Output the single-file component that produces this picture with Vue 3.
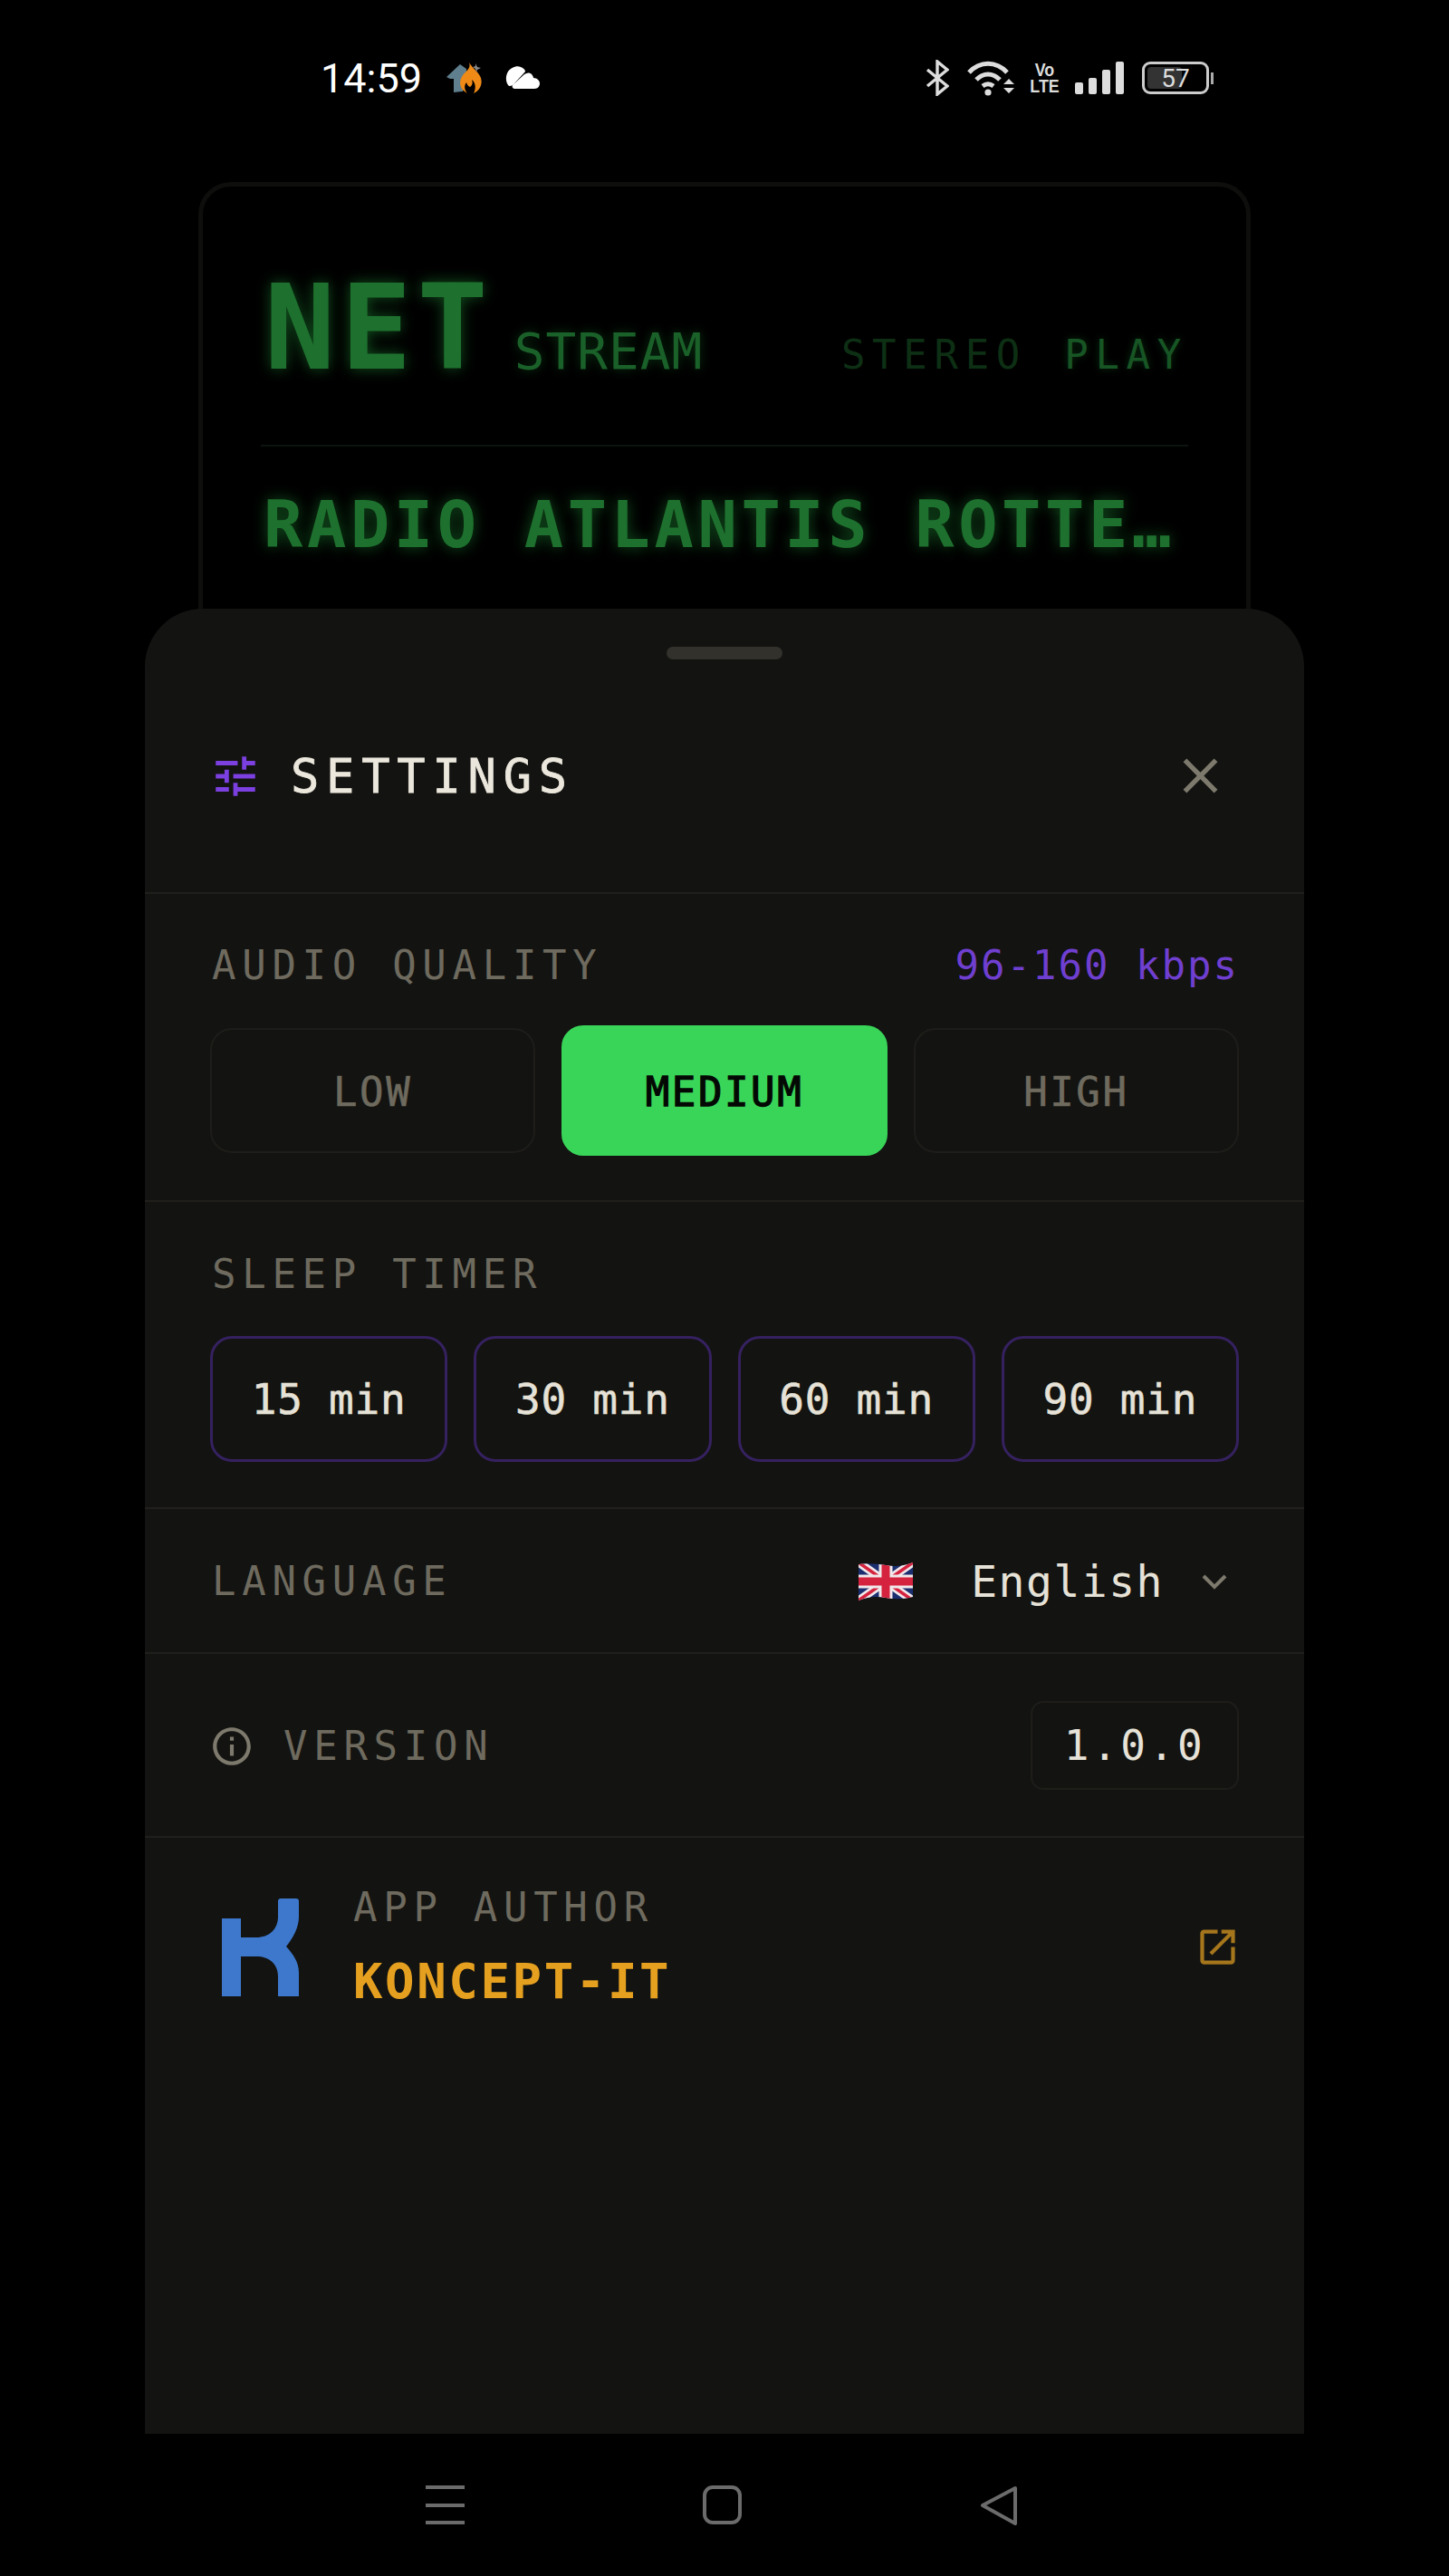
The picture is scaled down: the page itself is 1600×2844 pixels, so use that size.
<template>
  <div class="phone">
    <div class="status-bar">
      <div class="status-left">
        <span class="clock">14:59</span>
        <svg class="ic-home" width="42" height="36" viewBox="0 0 42 36">
          <path d="M0 17 15 3l7 5v3l-4 22-10 1V19H4z" fill="#5f7f8e"/>
          <path d="M25 1c2 6-2 8-7 14-5 7-3 15 2 18l3 2c-3-3-4-8-1-12 1 3 2 4 4 5 3-2 3-5 2-8 4 3 5 9 2 15 7-3 10-10 8-17-2-6-8-9-13-17z" fill="#ef8a17"/>
          <path d="M32 2l2 4 4 1-4 2-1 3-1-4-3-2 3-1z" fill="#8a8a8a"/>
        </svg>
        <svg class="ic-cloud" width="38" height="26" viewBox="0 0 38 26">
          <path d="M4 22C0 18 0 11 3 6c3-4 9-7 14-5 3 1 5 3 5 5l-11 12c-2 3-4 4-7 4z" fill="#fff"/>
          <path d="M11 25c-3 0-4-2-3-4L21 9c3-2 6-2 8 0 1 1 2 3 2 4 4 0 7 3 7 6 0 3-2 6-6 6z" fill="#fff"/>
        </svg>
      </div>
      <div class="status-right">
        <svg width="26" height="40" viewBox="0 0 26 40" fill="none" stroke="#ddd" stroke-width="3.4">
          <path d="M2 11 24 29 13 38V2l11 9L2 29"/>
        </svg>
        <svg width="52" height="40" viewBox="0 0 52 40" fill="none" stroke="#ddd" stroke-width="5">
          <path d="M2 14C14 1 32 1 44 14"/>
          <path d="M10 22c8-8 18-8 26 0"/>
          <path d="M17 29c4-3 8-3 12 0"/>
          <circle cx="23" cy="36" r="3.6" fill="#ddd" stroke="none"/>
          <path d="M46 21l6 6H40zM40 31h12l-6 6z" fill="#ddd" stroke="none"/>
        </svg>
        <div class="volte"><span>Vo</span><span>LTE</span></div>
        <div class="signal">
          <i class="bar-1"></i><i class="bar-2"></i><i class="bar-3"></i><i class="bar-4"></i>
        </div>
        <div class="battery">
          <div class="battery-body">
            <div class="battery-fill"></div>
            <span>57</span>
          </div>
          <div class="battery-nub"></div>
        </div>
      </div>
    </div>

    <div class="app">
      <div class="display">
        <div class="display-top">
          <span class="net">NET</span>
          <span class="stream">STREAM</span>
          <span class="flags"><span class="stereo">STEREO</span> <span class="play">PLAY</span></span>
        </div>
        <div class="station">RADIO ATLANTIS ROTTE…</div>
      </div>

      <div class="sheet">
        <div class="handle"></div>
        <header class="sheet-head">
          <div class="sheet-title">
            <svg width="58" height="58" viewBox="0 0 24 24" fill="#7c3fe0">
              <path d="M3 17v2h6v-2H3zM3 5v2h10V5H3zm10 16v-2h8v-2h-8v-2h-2v6h2zM7 9v2H3v2h4v2h2V9H7zm14 4v-2H11v2h10zm-6-4h2V7h4V5h-4V3h-2v6z"/>
            </svg>
            <h2>SETTINGS</h2>
          </div>
          <svg class="close" width="65" height="65" viewBox="0 0 24 24" fill="#7d796c">
            <path d="M19 6.41 17.59 5 12 10.59 6.41 5 5 6.41 10.59 12 5 17.59 6.41 19 12 13.41 17.59 19 19 17.59 13.41 12z"/>
          </svg>
        </header>

        <section class="block quality">
          <div class="row-head">
            <span class="label">AUDIO QUALITY</span>
            <span class="rate">96-160 kbps</span>
          </div>
          <div class="quality-opts">
            <button v-for="q in qualities" :key="q" class="opt" :class="{ active: q === 'MEDIUM' }">{{ q }}</button>
          </div>
        </section>

        <section class="block timer">
          <div class="label timer-label">SLEEP TIMER</div>
          <div class="timer-opts">
            <button v-for="t in timers" :key="t" class="timer-btn">{{ t }} min</button>
          </div>
        </section>

        <section class="block lang">
          <span class="label">LANGUAGE</span>
          <div class="lang-pick">
            <svg class="flag" width="60" height="42" viewBox="0 0 60 42">
              <clipPath id="flag-wave">
                <path d="M0 2Q15 0 30 3T60 0V38Q45 42 30 39T0 42Z"/>
              </clipPath>
              <g clip-path="url(#flag-wave)">
                <rect width="60" height="42" fill="#1b2f70"/>
                <path d="M0 0 60 42M60 0 0 42" stroke="#f0e8ea" stroke-width="9"/>
                <path d="M0 0 60 42M60 0 0 42" stroke="#d5233f" stroke-width="3.500"/>
                <path d="M30 0V42M0 21H60" stroke="#f0e8ea" stroke-width="15"/>
                <path d="M30 0V42M0 21H60" stroke="#d5233f" stroke-width="9"/>
              </g>
            </svg>
            <span class="lang-name">English</span>
            <svg width="30" height="18" viewBox="0 0 30 18" fill="none" stroke="#7d796c" stroke-width="4">
              <path d="M3 3l12 12L27 3"/>
            </svg>
          </div>
        </section>

        <section class="block version">
          <div class="version-left">
            <svg width="50" height="50" viewBox="0 0 24 24" fill="#7d796c">
              <path d="M11 7h2v2h-2zm0 4h2v6h-2zm1-9C6.48 2 2 6.48 2 12s4.48 10 10 10 10-4.48 10-10S17.52 2 12 2zm0 18c-4.41 0-8-3.59-8-8s3.59-8 8-8 8 3.59 8 8-3.590 8-8 8z"/>
            </svg>
            <span class="label">VERSION</span>
          </div>
          <span class="version-num">1.0.0</span>
        </section>

        <section class="author">
          <svg class="logo" width="85" height="108" viewBox="0 0 85 108" fill="#3d78cc">
            <path d="M0 22H21V43H38C52 43 62 34 62 20V3Q62 0 65 0H82Q85 0 85 3V20C85 32 79 43 71 53 79 62 85 70 85 82V108H62V86C62 72 52 64 38 64H21V108H0Z"/>
          </svg>
          <div class="author-text">
            <span class="label">APP AUTHOR</span>
            <span class="author-name">KONCEPT-IT</span>
          </div>
          <svg class="ext" width="51" height="51" viewBox="0 0 24 24" fill="#a5761c">
            <path d="M19 19H5V5h7V3H5a2 2 0 0 0-2 2v14a2 2 0 0 0 2 2h14c1.100 0 2-.9 2-2v-7h-2v7zM14 3v2h3.590l-9.830 9.830 1.410 1.410L19 6.410V10h2V3h-7z"/>
          </svg>
        </section>
      </div>
    </div>

    <nav class="nav-bar">
      <div class="nav-menu"><i></i><i></i><i></i></div>
      <div class="nav-home"></div>
      <svg width="42" height="44" viewBox="0 0 42 44" fill="none" stroke="#6b6b6b" stroke-width="4" stroke-linejoin="round">
        <path d="M39 3 3 22l36 20z"/>
      </svg>
    </nav>
  </div>
</template>

<script setup>
const qualities = ['LOW', 'MEDIUM', 'HIGH']
const timers = [15, 30, 60, 90]
</script>

<style>
html, body {
  margin: 0;
  background: #000;
}
</style>

<style scoped>
.phone {
  position: relative;
  width: 1600px;
  height: 2844px;
  background: #000;
  display: flex;
  flex-direction: column;
  overflow: hidden;
  font-family: "DejaVu Sans Mono", monospace;
}

.status-bar {
  height: 172px;
  flex: none;
  box-sizing: border-box;
  padding: 64px 260px 0 354px;
  display: flex;
  justify-content: space-between;
  align-items: flex-start;
  color: #fff;
}

.status-left,
.status-right {
  display: flex;
  align-items: center;
  height: 44px;
}

.clock {
  font-family: Roboto, sans-serif;
  font-size: 45px;
  width: 139px;
}

.ic-cloud {
  margin-left: 23px;
}

.status-right {
  gap: 20px;
}

.volte {
  display: flex;
  flex-direction: column;
  align-items: center;
  font-family: "Liberation Sans", sans-serif;
  font-weight: 700;
  font-size: 21px;
  line-height: 18px;
  color: #ddd;
  width: 27px;
  transform: scaleX(0.85);
}

.signal {
  display: flex;
  align-items: flex-end;
  gap: 6px;
  height: 36px;
}

.signal i {
  display: block;
  width: 9px;
  background: #ddd;
  border-radius: 2px;
}

.bar-1 { height: 13px; }
.bar-2 { height: 18px; }
.bar-3 { height: 27px; }
.bar-4 { height: 36px; }

.battery {
  display: flex;
  align-items: center;
  gap: 2px;
}

.battery-body {
  position: relative;
  width: 74px;
  height: 36px;
  box-sizing: border-box;
  border: 3px solid #ccc;
  border-radius: 9px;
  display: flex;
  align-items: center;
  justify-content: center;
  font-family: Roboto, sans-serif;
  font-size: 28px;
  color: #ddd;
}

.battery-fill {
  position: absolute;
  left: 3px;
  top: 3px;
  bottom: 3px;
  width: 38px;
  background: #333;
  border-radius: 4px;
}

.battery-body span {
  position: relative;
}

.battery-nub {
  width: 3px;
  height: 13px;
  background: #aaa;
}

.app {
  position: relative;
  flex: 1;
  min-height: 0;
  margin: 0 160px;
}

/* panel behind the dimmed backdrop */
.display {
  margin: 29px 59px 0;
  height: 600px;
  box-sizing: border-box;
  border: 5px solid #0e0e0c;
  border-radius: 36px;
  padding: 99px 64px 0;
  background: #000;
}

.display-top {
  display: flex;
  align-items: baseline;
  height: 114px;
  padding-bottom: 72px;
  border-bottom: 2px solid #0c140d;
}

.net {
  font-size: 130px;
  font-weight: 700;
  letter-spacing: 6px;
  line-height: 114px;
  color: #1e702e;
  margin-left: 4px;
  text-shadow: 0 0 16px rgba(34, 160, 60, 0.5);
}

.stream {
  font-size: 56px;
  letter-spacing: 1px;
  color: #1a6029;
  margin-left: 23px;
  text-shadow: 0 0 12px rgba(34, 160, 60, 0.35);
}

.flags {
  margin-left: auto;
  font-size: 44px;
  letter-spacing: 7.700px;
  word-spacing: 7px;
}

.stereo {
  color: #0d2f14;
}

.play {
  color: #175524;
  text-shadow: 0 0 8px rgba(34, 160, 60, 0.3);
}

.station {
  margin-top: 42px;
  font-size: 72px;
  font-weight: 700;
  letter-spacing: 4.600px;
  line-height: 88px;
  color: #1e702e;
  white-space: nowrap;
  padding: 0 3px;
  text-shadow: 0 0 16px rgba(34, 160, 60, 0.5);
}

.sheet {
  position: absolute;
  left: 0;
  right: 0;
  top: 500px;
  bottom: 157px;
  background: #131311;
  border-radius: 64px 64px 0 0;
}

.handle {
  width: 128px;
  height: 14px;
  background: #33312c;
  border-radius: 7px;
  margin: 42px auto 0;
}

.sheet-head {
  height: 259px;
  box-sizing: border-box;
  padding: 0 82px 0 71px;
  display: flex;
  align-items: center;
  justify-content: space-between;
  border-bottom: 2px solid #201f1c;
}

.sheet-title {
  display: flex;
  align-items: center;
  gap: 32px;
}

.sheet-title h2 {
  margin: 0;
  font-size: 52px;
  font-weight: 400;
  letter-spacing: 7.800px;
  color: #ebe7dc;
  -webkit-text-stroke: 0.8px #ebe7dc;
}

.block {
  box-sizing: border-box;
  padding: 0 72px;
  border-bottom: 2px solid #201f1c;
}

.label {
  font-size: 44px;
  letter-spacing: 6.700px;
  color: #6e6a5e;
  margin-left: 2px;
}

.row-head {
  display: flex;
  justify-content: space-between;
  align-items: center;
  height: 52px;
}

.rate {
  font-size: 44px;
  letter-spacing: 2px;
  color: #6f3fd0;
}

.quality {
  height: 340px;
  padding-top: 52px;
}

.quality-opts {
  display: grid;
  grid-template-columns: repeat(3, 1fr);
  gap: 29px;
  margin-top: 44px;
}

.opt {
  height: 138px;
  padding: 3px 0 0;
  background: transparent;
  border: 2px solid #1e1d1a;
  border-radius: 24px;
  font-family: inherit;
  font-size: 44px;
  letter-spacing: 2.600px;
  color: #6e6a5e;
  -webkit-text-stroke: 0.6px #6e6a5e;
}

.opt.active {
  background: #39d559;
  border-color: #39d559;
  color: #040804;
  -webkit-text-stroke: 1.300px #040804;
  height: 144px;
  margin: -3px 0;
}

.timer {
  height: 339px;
  padding-top: 54px;
}

.timer-label {
  line-height: 52px;
}

.timer-opts {
  display: grid;
  grid-template-columns: repeat(4, 1fr);
  gap: 29px;
  margin-top: 42px;
}

.timer-btn {
  height: 139px;
  background: transparent;
  border: 3px solid #35215f;
  border-radius: 24px;
  font-family: inherit;
  font-size: 46px;
  letter-spacing: 0.800px;
  color: #e6e2d7;
  -webkit-text-stroke: 0.6px #e6e2d7;
}

.lang {
  height: 160px;
  padding-top: 1px;
  display: flex;
  align-items: center;
  justify-content: space-between;
}

.lang-pick {
  display: flex;
  align-items: center;
  margin-right: 12px;
}

.lang-name {
  font-size: 48px;
  letter-spacing: 1.500px;
  color: #e6e2d7;
  margin-left: 64px;
  margin-right: 41px;
}

.version {
  height: 203px;
  display: flex;
  align-items: center;
  justify-content: space-between;
}

.version-left {
  display: flex;
  align-items: center;
  gap: 30px;
  margin-left: -1px;
  padding-top: 2px;
}

.version-num {
  width: 230px;
  height: 98px;
  box-sizing: border-box;
  border: 2px solid #1e1d1a;
  border-radius: 14px;
  display: flex;
  align-items: center;
  justify-content: center;
  font-size: 46px;
  letter-spacing: 3.600px;
  color: #e6e2d7;
}

.author {
  display: flex;
  align-items: center;
  padding: 51px 70px 0 85px;
}

.author-text {
  display: flex;
  flex-direction: column;
  gap: 25px;
  margin-left: 60px;
  flex: 1;
}

.author-text .label {
  margin-left: 0;
}

.author-name {
  font-size: 54px;
  font-weight: 700;
  letter-spacing: 2.600px;
  color: #e5a020;
}

.nav-bar {
  position: absolute;
  left: 0;
  right: 0;
  bottom: 0;
  height: 157px;
  background: #000;
  padding-left: 470px;
  box-sizing: border-box;
  display: flex;
  align-items: center;
}

.nav-menu {
  display: flex;
  flex-direction: column;
  gap: 15.500px;
  width: 43px;
}

.nav-menu i {
  display: block;
  height: 4px;
  background: #6b6b6b;
}

.nav-home {
  width: 43px;
  height: 43px;
  box-sizing: border-box;
  border: 4px solid #6b6b6b;
  border-radius: 11px;
  margin: 0 263px;
}
</style>
